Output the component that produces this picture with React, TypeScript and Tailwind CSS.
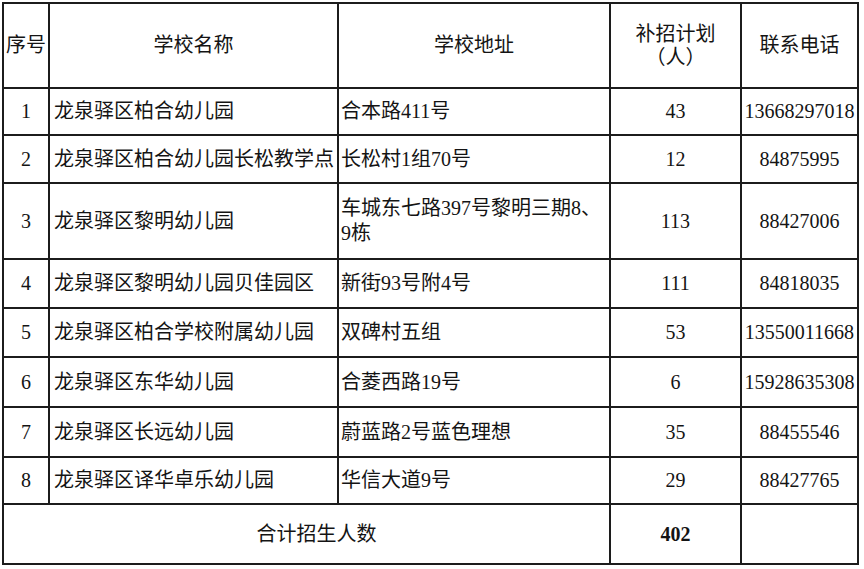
import React from 'react';

interface Row {
  no: number;
  name: string;
  address: React.ReactNode;
  plan: number;
  phone: string;
  h: string;
}

const rows: Row[] = [
  { no: 1, name: '龙泉驿区柏合幼儿园', address: '合本路411号', plan: 43, phone: '13668297018', h: 'h-[47px]' },
  { no: 2, name: '龙泉驿区柏合幼儿园长松教学点', address: '长松村1组70号', plan: 12, phone: '84875995', h: 'h-[48px]' },
  {
    no: 3,
    name: '龙泉驿区黎明幼儿园',
    address: (
      <>
        车城东七路397号黎明三期8、
        <br />
        9栋
      </>
    ),
    plan: 113,
    phone: '88427006',
    h: 'h-[76px]'
  },
  { no: 4, name: '龙泉驿区黎明幼儿园贝佳园区', address: '新街93号附4号', plan: 111, phone: '84818035', h: 'h-[49px]' },
  { no: 5, name: '龙泉驿区柏合学校附属幼儿园', address: '双碑村五组', plan: 53, phone: '13550011668', h: 'h-[49px]' },
  { no: 6, name: '龙泉驿区东华幼儿园', address: '合菱西路19号', plan: 6, phone: '15928635308', h: 'h-[50px]' },
  { no: 7, name: '龙泉驿区长远幼儿园', address: '蔚蓝路2号蓝色理想', plan: 35, phone: '88455546', h: 'h-[50px]' },
  { no: 8, name: '龙泉驿区译华卓乐幼儿园', address: '华信大道9号', plan: 29, phone: '88427765', h: 'h-[47px]' }
];

const cell = 'border-2 border-[#1c1c1c] p-0 align-middle';

const App: React.FC = () => {
  return (
    <div className="w-[864px] h-[569px] bg-white pt-[2px] pl-[2px] overflow-hidden">
      <table
        className="border-collapse table-fixed text-[20px] leading-[25px] text-[#141414]"
        style={{ fontFamily: '"Liberation Serif", "Noto Sans CJK SC", serif' }}
      >
        <colgroup>
          <col className="w-[46px]" />
          <col className="w-[289px]" />
          <col className="w-[272px]" />
          <col className="w-[131px]" />
          <col className="w-[117px]" />
        </colgroup>
        <thead>
          <tr className="h-[85px]">
            <th className={`${cell} font-normal text-center`}>序号</th>
            <th className={`${cell} font-normal text-center`}>学校名称</th>
            <th className={`${cell} font-normal text-center`}>学校地址</th>
            <th className={`${cell} font-normal text-center leading-[23px]`}>
              补招计划
              <br />
              （人）
            </th>
            <th className={`${cell} font-normal text-center`}>联系电话</th>
          </tr>
        </thead>
        <tbody>
          {rows.map((r) => (
            <tr key={r.no} className={r.h}>
              <td className={`${cell} text-center`}>{r.no}</td>
              <td className={`${cell} pl-[4px] whitespace-nowrap`}>{r.name}</td>
              <td className={`${cell} pl-[2px]`}>{r.address}</td>
              <td className={`${cell} text-center`}>{r.plan}</td>
              <td className={`${cell} text-center`}>{r.phone}</td>
            </tr>
          ))}
          <tr className="h-[60px]">
            <td colSpan={3} className={`${cell} text-center pl-[20px]`}>
              合计招生人数
            </td>
            <td className={`${cell} text-center font-bold`}>402</td>
            <td className={cell}></td>
          </tr>
        </tbody>
      </table>
    </div>
  );
};

export default App;
